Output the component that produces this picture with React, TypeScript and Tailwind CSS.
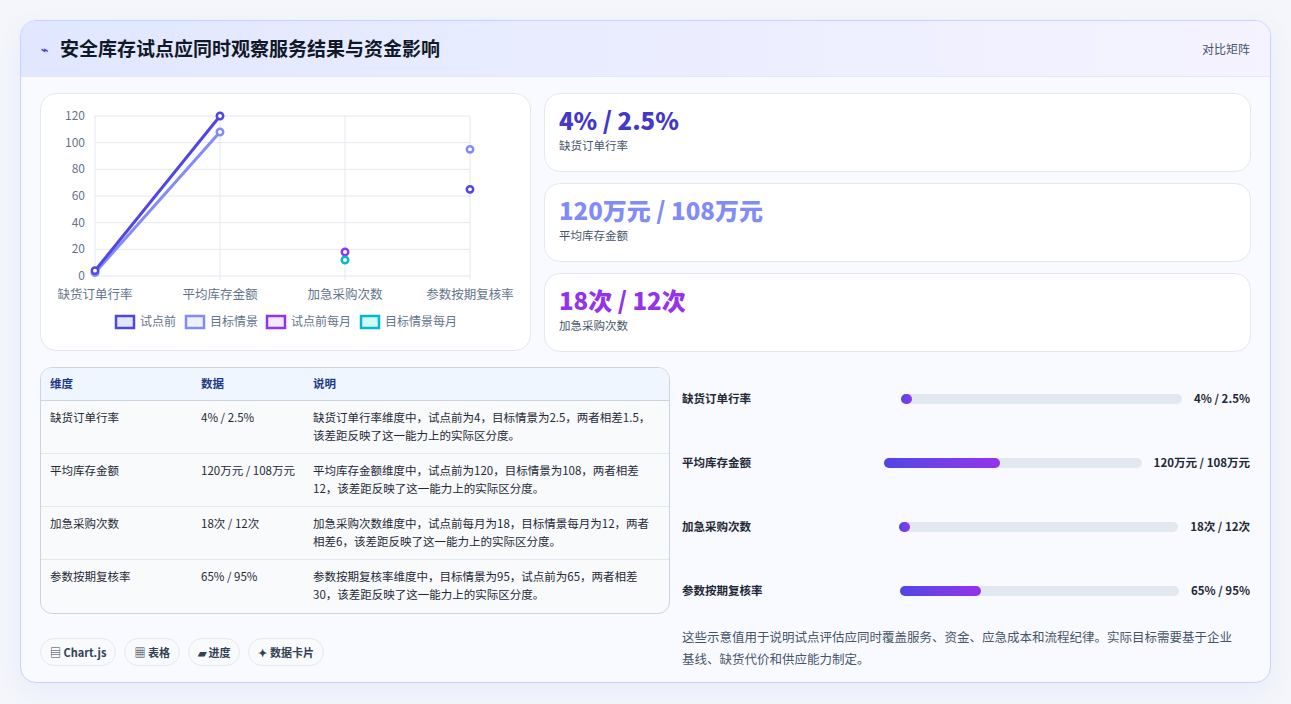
import React from "react";

const F = { fontFamily: '"Noto Sans CJK SC","Noto Sans",sans-serif' };

function Chart() {
  const xs = [54, 179, 304, 429];
  const y = (v: number) => 182 - (v / 120) * 160;
  const ticks = [0, 20, 40, 60, 80, 100, 120];
  const pt = (cx: number, cy: number, c: string, key: string) => (
    <circle key={key} cx={cx} cy={cy} r={3.2} fill="#fff" stroke={c} strokeWidth={2.5} />
  );
  const labels = ["缺货订单行率", "平均库存金额", "加急采购次数", "参数按期复核率"];
  const legend = [
    ["试点前", "#4f46e5", "#e0e7ff", 75],
    ["目标情景", "#818cf8", "#eef2ff", 145],
    ["试点前每月", "#9333ea", "#f3e8ff", 226],
    ["目标情景每月", "#06b6d4", "#cffafe", 320],
  ] as const;
  return (
    <svg width="490" height="257" style={F}>
      {ticks.map((t) => (
        <g key={t}>
          <line x1={54} x2={429} y1={y(t)} y2={y(t)} stroke="#e2e8f0" />
          <text x={44} y={y(t) + 4} fontSize="12" fill="#64748b" textAnchor="end">{t}</text>
        </g>
      ))}
      {xs.map((x, i) => (
        <g key={i}>
          <line x1={x} x2={x} y1={22} y2={186} stroke="#e2e8f0" />
          <text x={x} y={205} fontSize="12.5" fill="#64748b" textAnchor="middle">{labels[i]}</text>
        </g>
      ))}
      <line x1={54} x2={179} y1={y(2.5)} y2={y(108)} stroke="#818cf8" strokeWidth={3} />
      <line x1={54} x2={179} y1={y(4)} y2={y(120)} stroke="#4f46e5" strokeWidth={3} />
      {pt(54, y(2.5), "#818cf8", "a")}
      {pt(179, y(108), "#818cf8", "b")}
      {pt(429, y(95), "#818cf8", "c")}
      {pt(54, y(4), "#4f46e5", "d")}
      {pt(179, y(120), "#4f46e5", "e")}
      {pt(429, y(65), "#4f46e5", "f")}
      {pt(304, y(18), "#9333ea", "g")}
      {pt(304, y(12), "#06b6d4", "h")}
      {legend.map(([t, c, bg, x]) => (
        <g key={t}>
          <rect x={x} y={222} width={18} height={12} fill={bg} stroke={c} strokeWidth={2.5} />
          <text x={x + 24} y={232} fontSize="12" fill="#64748b">{t}</text>
        </g>
      ))}
    </svg>
  );
}

const rows = [
  ["缺货订单行率", "4% / 2.5%", "缺货订单行率维度中，试点前为4，目标情景为2.5，两者相差1.5，该差距反映了这一能力上的实际区分度。"],
  ["平均库存金额", "120万元 / 108万元", "平均库存金额维度中，试点前为120，目标情景为108，两者相差12，该差距反映了这一能力上的实际区分度。"],
  ["加急采购次数", "18次 / 12次", "加急采购次数维度中，试点前每月为18，目标情景每月为12，两者相差6，该差距反映了这一能力上的实际区分度。"],
  ["参数按期复核率", "65% / 95%", "参数按期复核率维度中，目标情景为95，试点前为65，两者相差30，该差距反映了这一能力上的实际区分度。"],
];

const bars = [
  ["缺货订单行率", "4% / 2.5%", "4%"],
  ["平均库存金额", "120万元 / 108万元", "45%"],
  ["加急采购次数", "18次 / 12次", "4%"],
  ["参数按期复核率", "65% / 95%", "29%"],
];

export default function App() {
  return (
    <div className="w-[1291px] h-[704px] bg-[#f4f6fb] pt-[20px] pl-[20px]" style={F}>
      <div className="w-[1251px] h-[663px] rounded-2xl border border-[#c7d2fe] bg-[#f8faff] overflow-hidden shadow-[0_8px_24px_rgba(99,102,241,0.08)]">
        <div className="h-[56px] flex items-center justify-between px-5 bg-gradient-to-r from-[#e0e7ff] to-[#f5f3ff] border-b border-[#e0e7ff]">
          <div className="flex items-center gap-3">
            <span className="text-[#4f46e5] text-[12px] font-bold">⌁</span>
            <span className="text-[19px] font-bold text-[#111827]">安全库存试点应同时观察服务结果与资金影响</span>
          </div>
          <span className="text-[12px] text-[#475569]">对比矩阵</span>
        </div>
        <div className="px-[19px] pt-[16px]">
          <div className="grid grid-cols-[491px_1fr] gap-x-[13px]">
            <div className="h-[258px] bg-white rounded-2xl border border-[#e2e8f0]">
              <Chart />
            </div>
            <div className="flex flex-col gap-[11px]">
              {[
                ["4% / 2.5%", "缺货订单行率", "text-[#4338ca]"],
                ["120万元 / 108万元", "平均库存金额", "text-[#818cf8]"],
                ["18次 / 12次", "加急采购次数", "text-[#9333ea]"],
              ].map(([v, l, c]) => (
                <div key={l} className="h-[79px] bg-white rounded-2xl border border-[#e2e8f0] px-[14px] pt-[10px]">
                  <div className={`text-[24px] font-extrabold leading-[32px] ${c}`}>{v}</div>
                  <div className="text-[11.5px] text-[#475569] mt-[1px]">{l}</div>
                </div>
              ))}
            </div>
          </div>
          <div className="grid grid-cols-[630px_1fr] gap-x-[12px] mt-[15px]">
            <div>
              <div className="rounded-xl border border-[#cbd5e1] bg-[#f8fafc] overflow-hidden">
                <div className="grid grid-cols-[151px_112px_1fr] h-[33px] items-center bg-[#eff6ff] border-b border-[#cbd5e1] text-[11.5px] font-semibold text-[#1e3a8a] px-[9px]">
                  <span>维度</span><span>数据</span><span>说明</span>
                </div>
                {rows.map((r, i) => (
                  <div key={i} className={`grid grid-cols-[151px_112px_1fr] h-[53px] pt-[7px] px-[9px] text-[11.5px] leading-[18px] text-[#1f2937] ${i < 3 ? "border-b border-[#e2e8f0]" : ""}`}>
                    <span>{r[0]}</span><span className="pr-2">{r[1]}</span><span>{r[2]}</span>
                  </div>
                ))}
              </div>
              <div className="flex gap-[8px] mt-[24px]">
                {["▤ Chart.js", "▦ 表格", "▰ 进度", "✦ 数据卡片"].map((t) => (
                  <span key={t} className="h-[28px] px-[9px] rounded-full border border-[#e2e8f0] bg-[#f8fafc] text-[11px] font-semibold text-[#334155] flex items-center">{t}</span>
                ))}
              </div>
            </div>
            <div className="pr-[1px]">
              <div className="flex flex-col">
                {bars.map(([l, v, w]) => (
                  <div key={l} className="h-[64px] flex items-center gap-2 text-[11.5px] font-semibold text-[#1f2937]">
                    <span className="flex-[3]">{l}</span>
                    <div className="flex-[4] h-[10px] rounded-full bg-[#e2e8f0]">
                      <div className="h-full rounded-full bg-gradient-to-r from-[#4f46e5] to-[#9333ea] min-w-[11px]" style={{ width: w }} />
                    </div>
                    <span className="font-bold ml-1">{v}</span>
                  </div>
                ))}
              </div>
              <p className="mt-[3px] text-[12.5px] leading-[22px] text-[#475569] pr-3">
                这些示意值用于说明试点评估应同时覆盖服务、资金、应急成本和流程纪律。实际目标需要基于企业基线、缺货代价和供应能力制定。
              </p>
            </div>
          </div>
        </div>
      </div>
    </div>
  );
}
